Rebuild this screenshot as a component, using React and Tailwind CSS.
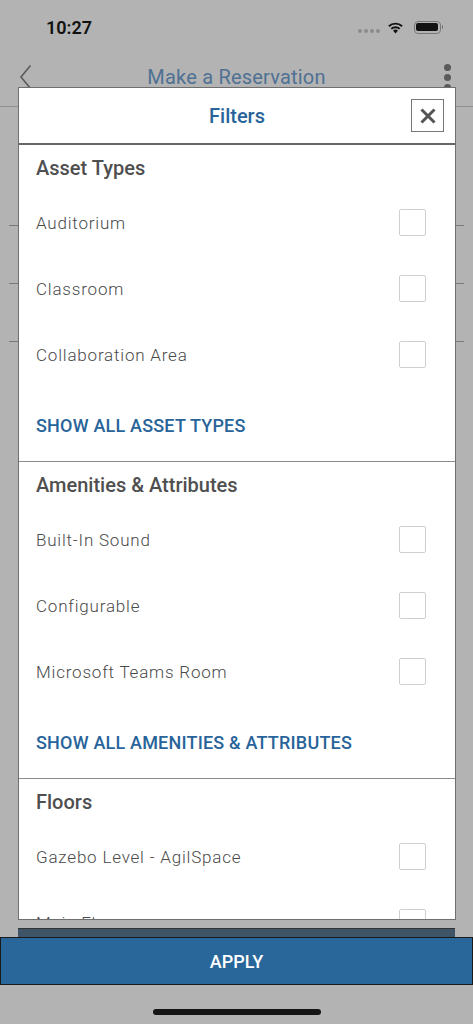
import React from "react";

const font = { fontFamily: "Roboto, 'Liberation Sans', sans-serif" };

function Checkbox() {
  return <div className="h-[27px] w-[27px] shrink-0 rounded-[2px] border border-[#cfcfcf] bg-white" />;
}

function Item({ label }) {
  return (
    <div className="flex h-[66px] items-center justify-between pr-[29px]">
      <span className="pt-[4px] text-[17px] font-light tracking-[0.8px] text-[#4a4a4a]">{label}</span>
      <Checkbox />
    </div>
  );
}

function Section({ title, items, showAll, border = true }) {
  return (
    <div className={border ? "border-b border-[#8a8a8a] pl-[17px]" : "pl-[17px]"}>
      <div className="flex h-[44px] items-center pt-[2px] text-[20px] font-medium text-[#4f4f4f]">{title}</div>
      {items.map((i) => (
        <Item key={i} label={i} />
      ))}
      {showAll && (
        <div className="flex h-[74px] items-center pt-[2px] text-[18px] font-medium tracking-[0.2px] text-[#28649a]">{showAll}</div>
      )}
    </div>
  );
}

export default function App() {
  return (
    <div className="relative h-[1024px] w-[473px] overflow-hidden bg-[#b3b3b3]" style={font}>
      {/* status bar */}
      <div className="flex h-[50px] items-center justify-between pl-[46px] pr-[30px] pt-[4px]">
        <span className="text-[18px] font-semibold text-[#111]">10:27</span>
        <div className="flex items-center gap-[7px]">
          <div className="flex gap-[2px] pt-[8px]">
            <span className="h-[4px] w-[4px] rounded-full bg-[#8c8c8c]" />
            <span className="h-[4px] w-[4px] rounded-full bg-[#8c8c8c]" />
            <span className="h-[4px] w-[4px] rounded-full bg-[#8c8c8c]" />
            <span className="h-[4px] w-[4px] rounded-full bg-[#8c8c8c]" />
          </div>
          <svg width="17" height="13" viewBox="0 0 17 13">
            <path d="M8.5 12.5 L6 9.6 A3.8 3.8 0 0 1 11 9.6 Z" fill="#111" />
            <path d="M3.6 7.2 A7 7 0 0 1 13.4 7.2 L12 8.6 A5 5 0 0 0 5 8.6 Z" fill="#111" />
            <path d="M1.2 4.6 A10.5 10.5 0 0 1 15.8 4.6 L14.4 6 A8.5 8.5 0 0 0 2.6 6 Z" fill="#111" />
          </svg>
          <div className="ml-[3px] flex items-center">
            <div className="flex h-[13px] w-[27px] items-center rounded-[4px] border border-[#777] p-[1.5px]">
              <div className="h-full w-full rounded-[2px] bg-[#111]" />
            </div>
            <div className="ml-[1px] h-[4px] w-[1.5px] rounded-r bg-[#777]" />
          </div>
        </div>
      </div>
      {/* nav bar */}
      <div className="relative flex h-[57px] items-center justify-center border-b border-[#8f8f8f]">
        <svg className="absolute left-[19px] top-[14px]" width="13" height="26" viewBox="0 0 13 26">
          <path d="M11.5 1.5 L2 13 L11.5 24.5" fill="none" stroke="#5a5a5a" strokeWidth="1.6" />
        </svg>
        <span className="-mt-[3px] text-[20px] tracking-[0.2px] text-[#4f7194]">Make a Reservation</span>
        <div className="absolute right-[22px] top-[14px] flex flex-col gap-[3px]">
          <span className="h-[7px] w-[7px] rounded-full bg-[#5a5a5a]" />
          <span className="h-[7px] w-[7px] rounded-full bg-[#5a5a5a]" />
          <span className="h-[7px] w-[7px] rounded-full bg-[#5a5a5a]" />
        </div>
      </div>
      {/* background list rows */}
      <div className="mx-[9px]">
        <div className="h-[119px] border-b border-[#7a7a7a]" />
        <div className="h-[58px] border-b border-[#7a7a7a]" />
        <div className="h-[58px] border-b border-[#7a7a7a]" />
      </div>

      {/* modal */}
      <div className="absolute left-[18px] top-[87px] flex h-[833px] w-[438px] flex-col overflow-hidden border border-[#6f6f6f] bg-white">
        <div className="relative flex h-[57px] shrink-0 items-center justify-center border-b-2 border-[#666]">
          <span className="text-[20px] font-medium text-[#28649a]">Filters</span>
          <div className="absolute right-[11px] top-[11px] flex h-[33px] w-[33px] items-center justify-center border-[1.5px] border-[#777]">
            <svg width="18" height="18" viewBox="0 0 18 18">
              <path d="M2.5 2.5 L15.5 15.5 M15.5 2.5 L2.5 15.5" stroke="#555" strokeWidth="3" />
            </svg>
          </div>
        </div>
        <div className="flex-1 overflow-hidden">
          <Section
            title="Asset Types"
            items={["Auditorium", "Classroom", "Collaboration Area"]}
            showAll="SHOW ALL ASSET TYPES"
          />
          <Section
            title="Amenities & Attributes"
            items={["Built-In Sound", "Configurable", "Microsoft Teams Room"]}
            showAll="SHOW ALL AMENITIES & ATTRIBUTES"
          />
          <Section title="Floors" items={["Gazebo Level - AgilSpace", "Main Floor"]} border={false} />
        </div>
      </div>

      {/* bottom */}
      <div className="absolute left-0 right-0 top-[928px] flex flex-col">
        <div className="mx-[18px] h-[9px] border-t border-[#333] bg-[#3f5567]" />
        <div className="flex h-[48px] items-center justify-center border border-[#1a1a1a] bg-[#29679a]">
          <span className="text-[18px] font-medium text-white">APPLY</span>
        </div>
      </div>
      <div className="absolute left-[153px] top-[1009px] h-[6px] w-[168px] rounded-full bg-[#151515]" />
    </div>
  );
}
